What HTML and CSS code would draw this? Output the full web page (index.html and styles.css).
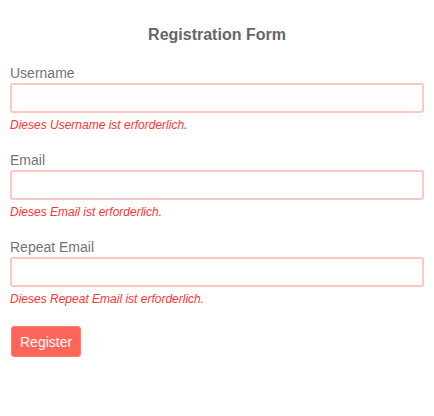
FILE: index.html
```html
<!DOCTYPE html>
<html>
<head>
<meta charset="utf-8">
<link rel="stylesheet" href="styles.css">
</head>
<body>
<form class="form">
  <h2 class="title">Registration Form</h2>
  <div class="field">
    <label class="label">Username</label>
    <input class="input" type="text">
    <div class="error">Dieses Username ist erforderlich.</div>
  </div>
  <div class="field">
    <label class="label">Email</label>
    <input class="input" type="text">
    <div class="error">Dieses Email ist erforderlich.</div>
  </div>
  <div class="field">
    <label class="label">Repeat Email</label>
    <input class="input" type="text">
    <div class="error">Dieses Repeat Email ist erforderlich.</div>
  </div>
  <div class="actions">
    <button class="button" type="button">Register</button>
  </div>
</form>
</body>
</html>
```
FILE: styles.css
```css
html, body {
  margin: 0;
  padding: 0;
  background: #ffffff;
}
body {
  font-family: "Liberation Sans", Arial, sans-serif;
  color: #666666;
}
.form {
  padding: 26px 10px 0 10px;
  display: flex;
  flex-direction: column;
}
.title {
  margin: 0 0 21px 0;
  font-size: 16px;
  line-height: 18px;
  font-weight: bold;
  text-align: center;
  color: #666666;
}
.field {
  display: flex;
  flex-direction: column;
  margin-bottom: 20px;
}
.label {
  font-size: 14px;
  line-height: 16px;
  color: #737373;
  margin-bottom: 2px;
}
.input {
  box-sizing: border-box;
  width: 100%;
  height: 30px;
  margin: 0;
  border: 2px solid #ffc6c4;
  border-radius: 3px;
  background: #ffffff;
  outline: none;
}
.error {
  margin-top: 5px;
  font-size: 12px;
  line-height: 14px;
  font-style: italic;
  color: #ff3333;
}
.actions {
  display: flex;
  padding-left: 1px;
}
.button {
  box-sizing: border-box;
  height: 31px;
  padding: 0 8px;
  border: 1px solid #ff7b70;
  border-radius: 3px;
  background: #ff6659;
  color: #ffffff;
  font-family: "Liberation Sans", Arial, sans-serif;
  font-size: 14px;
  line-height: 16px;
}
```
